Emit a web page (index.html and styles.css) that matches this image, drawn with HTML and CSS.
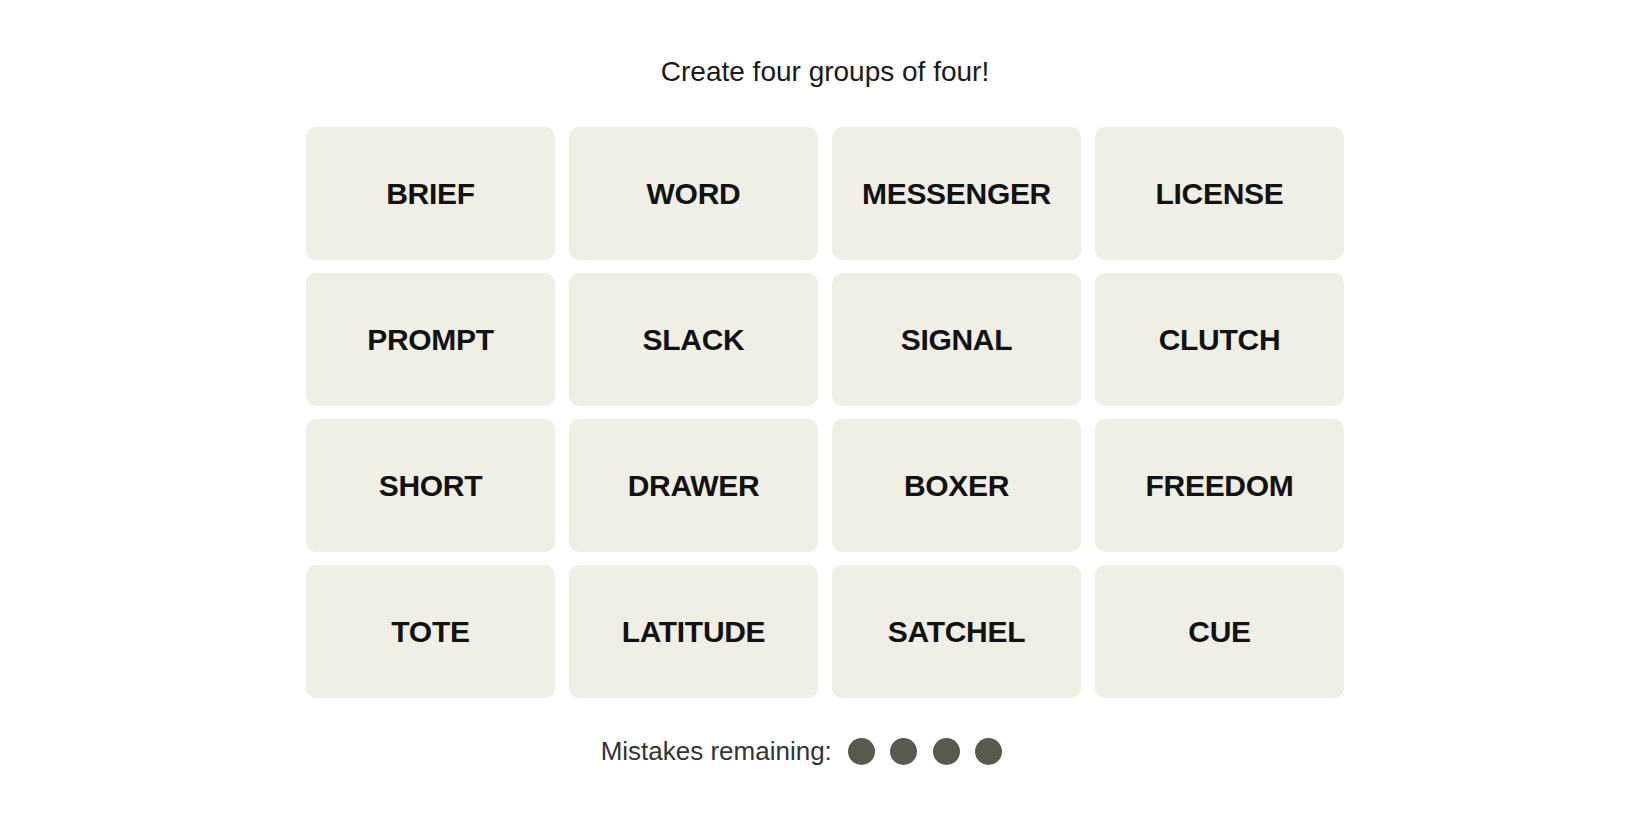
FILE: index.html
```html
<!DOCTYPE html>
<html lang="en">
<head>
<meta charset="utf-8">
<title>Connections</title>
<link rel="stylesheet" href="styles.css">
</head>
<body>
<main class="game">
  <h2 class="prompt">Create four groups of four!</h2>
  <section class="board">
    <button class="tile">BRIEF</button>
    <button class="tile">WORD</button>
    <button class="tile">MESSENGER</button>
    <button class="tile">LICENSE</button>
    <button class="tile">PROMPT</button>
    <button class="tile">SLACK</button>
    <button class="tile">SIGNAL</button>
    <button class="tile">CLUTCH</button>
    <button class="tile">SHORT</button>
    <button class="tile">DRAWER</button>
    <button class="tile">BOXER</button>
    <button class="tile">FREEDOM</button>
    <button class="tile">TOTE</button>
    <button class="tile">LATITUDE</button>
    <button class="tile">SATCHEL</button>
    <button class="tile">CUE</button>
  </section>
  <div class="mistakes">
    <span class="mistakes-label">Mistakes remaining:</span>
    <span class="dots">
      <span class="dot"></span>
      <span class="dot"></span>
      <span class="dot"></span>
      <span class="dot"></span>
    </span>
  </div>
</main>
</body>
</html>
```
FILE: styles.css
```css
html, body {
  margin: 0;
  padding: 0;
  background: #ffffff;
}

body {
  font-family: "Liberation Sans", Arial, sans-serif;
  color: #121212;
}

.game {
  display: flex;
  flex-direction: column;
  align-items: center;
  padding-top: 58px;
}

.prompt {
  margin: 0 0 41px 0;
  font-size: 28px;
  line-height: 28px;
  font-weight: 400;
  color: #1a1a1a;
}

.board {
  display: grid;
  grid-template-columns: repeat(4, 249px);
  grid-auto-rows: 133px;
  column-gap: 14px;
  row-gap: 13px;
}

.tile {
  border: none;
  margin: 0;
  padding: 0;
  background: #efefe6;
  border-radius: 10px;
  font-family: "Liberation Sans", Arial, sans-serif;
  font-weight: 700;
  font-size: 30px;
  letter-spacing: -0.3px;
  color: #121212;
  display: flex;
  align-items: center;
  justify-content: center;
}

.mistakes {
  margin-top: 40px;
  display: flex;
  align-items: center;
  gap: 16px;
  padding-right: 47px;
}

.mistakes-label {
  font-size: 26px;
  line-height: 27px;
  color: #333333;
}

.dots {
  display: flex;
  gap: 15.5px;
}

.dot {
  width: 27px;
  height: 27px;
  border-radius: 50%;
  background: #5a594e;
}
```
